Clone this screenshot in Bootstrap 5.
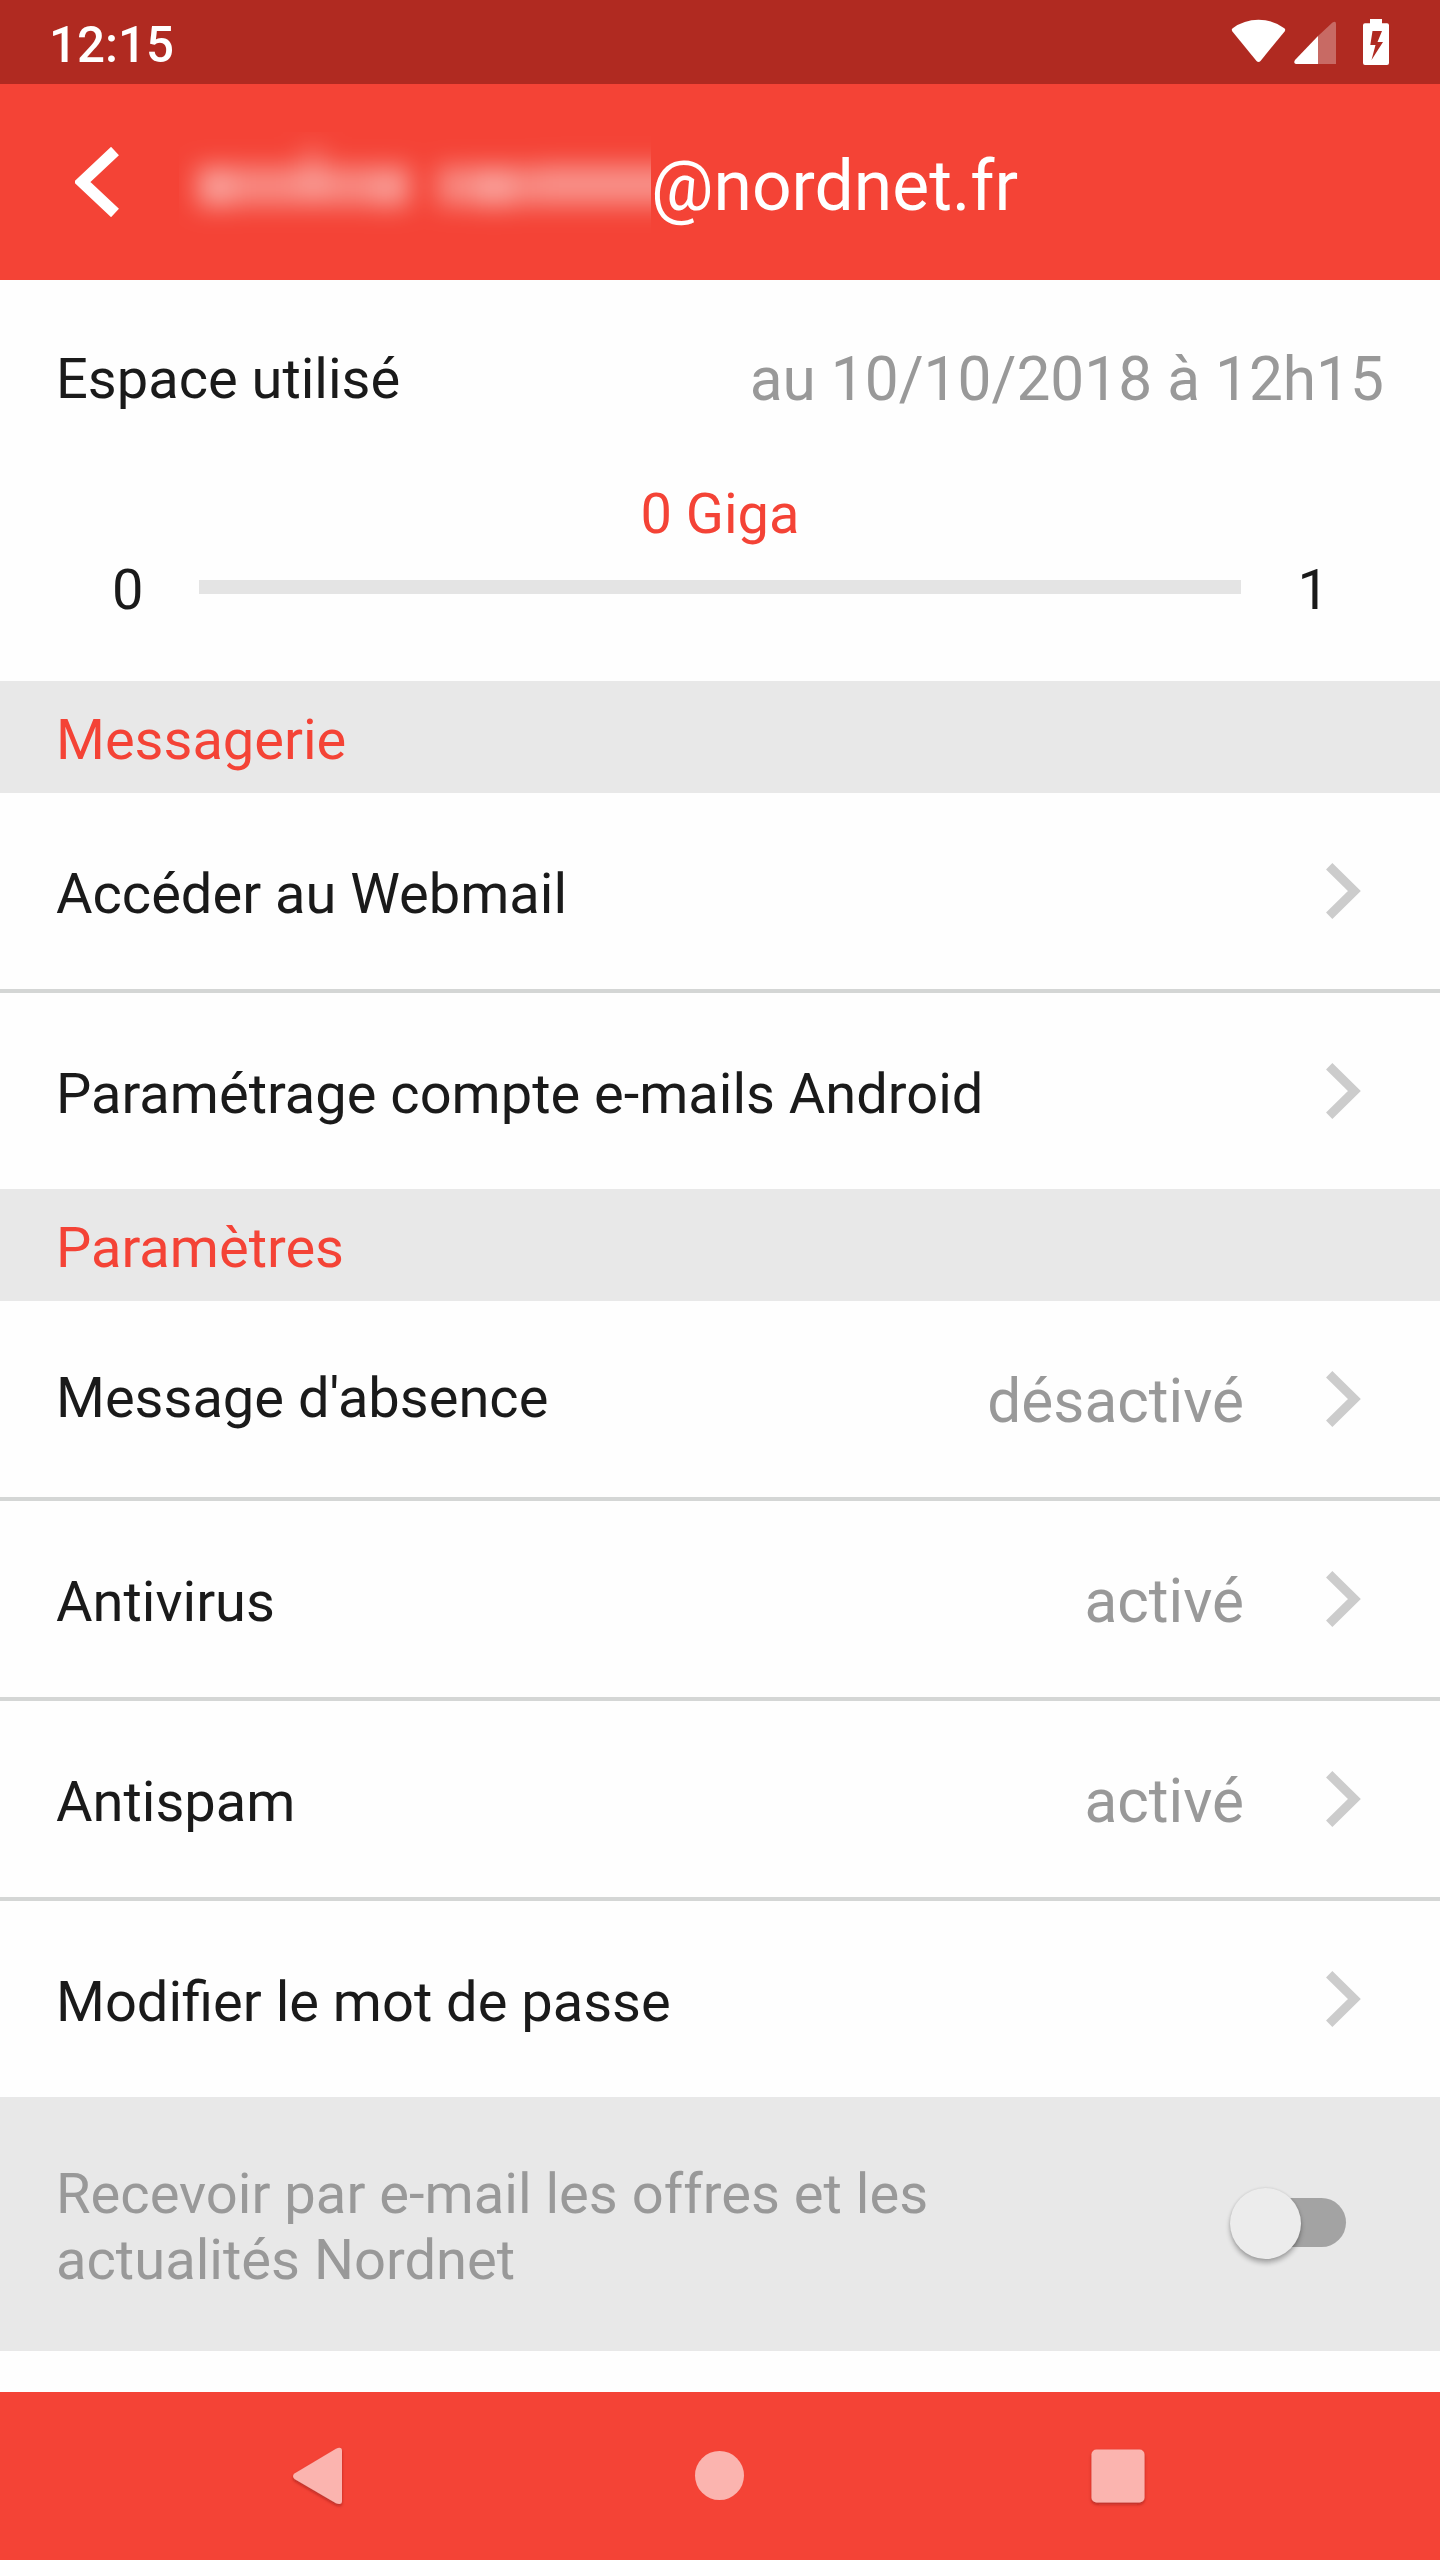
<!DOCTYPE html>
<html lang="fr">
<head>
<meta charset="utf-8">
<meta name="viewport" content="width=device-width, initial-scale=1">
<title>Messagerie Nordnet</title>
<link href="https://cdn.jsdelivr.net/npm/bootstrap@5.3.0/dist/css/bootstrap.min.css" rel="stylesheet">
<style>
  :root { --nn-red: #f44336; --nn-dark: #b02a21; --nn-grey: #e8e8e8; --nn-muted: #999; }
  body { font-family: Roboto, "Noto Sans", sans-serif; font-size: 56px; line-height: 66px; color: #1a1a1a; background: #fefefe; }
  .screen { height: 2560px; overflow: hidden; }
  .status-strip { height: 84px; background: var(--nn-dark); padding: 4px 48px 0 49px; font-size: 49.3px; font-weight: 500; }
  .status-strip span { padding-top: 2px; }
  .status-icons { margin-bottom: 6px; }
  .app-head { height: 196px; background: var(--nn-red); padding-left: 75px; font-size: 69.6px; line-height: 82px; }
  .mail-mask { margin-left: 60px; margin-top: 12px; }
  .mail-host { padding-top: 7px; }
  .usage { height: 401px; padding-top: 66px; }
  .usage-line { padding: 0 56px; height: 68px; }
  .big-note { font-size: 60.3px; line-height: 70px; color: var(--nn-muted); }
  .usage-line .big-note { margin-top: -1px; font-size: 60.4px; }
  .accent { color: var(--nn-red); }
  .usage-value { margin-top: 67px; }
  .gauge { margin-top: 10px; padding: 0 111px 0 112px; }
  .gauge .progress { height: 14px; width: 1042px; margin: 0 2px 6px 0; background: #e4e4e4; }
  .section-title { height: 112px; padding: 6px 56px 0; background: var(--nn-grey); color: var(--nn-red); }
  .list-group-item.entry { height: 200px; padding: 0 79px 0 56px; border: 0; border-bottom: 4px solid #d4d6d5; background: transparent; color: inherit; }
  .list-group-item.entry:last-child { height: 196px; border-bottom: 0; }
  .entry-label { padding-top: 6px; }
  .entry-label.raised { padding-top: 0; margin-top: -2px; }
  .entry-state { padding-top: 6px; margin-right: 82px; }
  .offers { height: 254px; padding: 0 94px 0 56px; background: var(--nn-grey); color: var(--nn-muted); }
  .offers p { width: 960px; padding-top: 6px; font-size: 56.1px; }
  .toggle { width: 116px; height: 71px; margin-bottom: 2px; position: relative; }
  .toggle-track { width: 90px; height: 49px; border-radius: 25px; background: #a3a3a3; margin-left: 26px; margin-bottom: 2px; }
  .toggle-knob { position: absolute; left: 0; top: 0; width: 71px; height: 71px; border-radius: 50%; background: #ececec; box-shadow: 0 4px 5px rgba(0,0,0,.28), 0 0 3px rgba(0,0,0,.12); }
  .system-nav { height: 168px; background: var(--nn-red); }
</style>
</head>
<body>
<div class="screen d-flex flex-column">
  <div class="status-strip d-flex align-items-center justify-content-between text-white">
    <span>12:15</span>
    <svg class="status-icons" width="168" height="50" viewBox="1224 16 168 50" fill="#fff" aria-hidden="true">
      <path d="M1232.7 28.2Q1244 19.7 1258.5 19.7T1284.3 28.2Q1286 29.6 1284.6 31.4L1260.5 60.9Q1258.5 63.1 1256.5 60.9L1232.4 31.4Q1231 29.6 1232.7 28.2Z"/>
      <path opacity=".3" d="M1318 36 1332.5 22.5Q1336 20.5 1336 24V64H1318Z"/>
      <path d="M1318 36V64H1296Q1293 63 1295 60Z"/>
      <path fill-rule="evenodd" d="M1370 19H1382V23.3H1387Q1389 23.3 1389 25.3V63Q1389 65 1387 65H1365Q1363 65 1363 63V25.3Q1363 23.3 1365 23.3H1370ZM1372.5 31 1370.3 45H1375.5L1371.5 60 1383 42H1377.5L1382 31Z"/>
    </svg>
  </div>
  <header class="app-head d-flex align-items-center text-white">
    <svg width="44" height="70" viewBox="0 0 44 70" aria-hidden="true"><path d="M40 4 7 35 40 66" fill="none" stroke="#fff" stroke-width="11.5"/></svg>
    <!-- Masked local part of the address -->
    <svg class="mail-mask" width="472" height="112" viewBox="180 132 472 112" aria-hidden="true">
      <defs><filter id="mask-blur" filterUnits="userSpaceOnUse" x="120" y="90" width="640" height="200"><feGaussianBlur stdDeviation="12"/></filter></defs>
      <g fill="#fff" filter="url(#mask-blur)">
        <rect x="197" y="166" width="215" height="40" opacity=".37"/>
        <rect x="438" y="166" width="280" height="40" opacity=".37"/>
        <rect x="205" y="170" width="28" height="38" opacity=".2"/>
        <rect x="300" y="146" width="28" height="50" opacity=".16"/>
        <rect x="375" y="172" width="28" height="36" opacity=".16"/>
        <rect x="478" y="170" width="34" height="38" opacity=".2"/>
        <rect x="540" y="160" width="170" height="36" opacity=".08"/>
      </g>
    </svg>
    <div class="mail-host">@nordnet.fr</div>
  </header>

  <section class="usage">
    <div class="usage-line d-flex justify-content-between">
      <span>Espace utilisé</span><span class="big-note">au 10/10/2018 à 12h15</span>
    </div>
    <div class="usage-value text-center accent">0 Giga</div>
    <div class="gauge d-flex align-items-center justify-content-between">
      <span>0</span>
      <div class="progress rounded-0" role="progressbar" aria-valuenow="0" aria-valuemin="0" aria-valuemax="1"><div class="progress-bar" style="width:0%"></div></div>
      <span>1</span>
    </div>
  </section>

  <div class="section-title d-flex align-items-center">Messagerie</div>
  <div class="list-group list-group-flush">
    <a href="#" class="list-group-item entry d-flex align-items-center"><span class="entry-label me-auto">Accéder au Webmail</span><svg width="35" height="56" viewBox="0 0 35 56" aria-hidden="true"><path d="M3.2 3.2 28.4 28 3.2 52.8" fill="none" stroke="#ccc" stroke-width="9"/></svg></a>
    <a href="#" class="list-group-item entry d-flex align-items-center"><span class="entry-label me-auto">Paramétrage compte e-mails Android</span><svg width="35" height="56" viewBox="0 0 35 56" aria-hidden="true"><path d="M3.2 3.2 28.4 28 3.2 52.8" fill="none" stroke="#ccc" stroke-width="9"/></svg></a>
  </div>

  <div class="section-title d-flex align-items-center">Paramètres</div>
  <div class="list-group list-group-flush">
    <a href="#" class="list-group-item entry d-flex align-items-center"><span class="entry-label raised me-auto">Message d'absence</span><span class="entry-state big-note">désactivé</span><svg width="35" height="56" viewBox="0 0 35 56" aria-hidden="true"><path d="M3.2 3.2 28.4 28 3.2 52.8" fill="none" stroke="#ccc" stroke-width="9"/></svg></a>
    <a href="#" class="list-group-item entry d-flex align-items-center"><span class="entry-label me-auto">Antivirus</span><span class="entry-state big-note">activé</span><svg width="35" height="56" viewBox="0 0 35 56" aria-hidden="true"><path d="M3.2 3.2 28.4 28 3.2 52.8" fill="none" stroke="#ccc" stroke-width="9"/></svg></a>
    <a href="#" class="list-group-item entry d-flex align-items-center"><span class="entry-label me-auto">Antispam</span><span class="entry-state big-note">activé</span><svg width="35" height="56" viewBox="0 0 35 56" aria-hidden="true"><path d="M3.2 3.2 28.4 28 3.2 52.8" fill="none" stroke="#ccc" stroke-width="9"/></svg></a>
    <a href="#" class="list-group-item entry d-flex align-items-center"><span class="entry-label me-auto">Modifier le mot de passe</span><svg width="35" height="56" viewBox="0 0 35 56" aria-hidden="true"><path d="M3.2 3.2 28.4 28 3.2 52.8" fill="none" stroke="#ccc" stroke-width="9"/></svg></a>
  </div>

  <div class="offers d-flex align-items-center justify-content-between">
    <p class="mb-0">Recevoir par e-mail les offres et les actualités Nordnet</p>
    <div class="toggle d-flex align-items-center" role="switch" aria-checked="false"><div class="toggle-track"></div><div class="toggle-knob"></div></div>
  </div>

  <nav class="system-nav mt-auto">
    <svg class="d-block" width="1440" height="168" viewBox="0 2392 1440 168" aria-hidden="true">
      <defs><filter id="drop" x="-20%" y="-20%" width="140%" height="150%"><feDropShadow dx="0" dy="2" stdDeviation="1.5" flood-color="#7a1008" flood-opacity=".5"/></filter></defs>
      <g fill="#fbb4af" filter="url(#drop)">
        <path d="M294.5 2473.5 336 2448.7Q342 2446.2 342 2451V2501Q342 2505.5 336 2503.3L294.5 2479Q291.5 2476 294.5 2473.5Z"/>
        <rect x="1091.5" y="2449.5" width="53" height="53" rx="5"/>
      </g>
      <circle cx="719.5" cy="2475.5" r="24.5" fill="#fbb4af"/>
    </svg>
  </nav>
</div>
<script src="https://cdn.jsdelivr.net/npm/bootstrap@5.3.0/dist/js/bootstrap.bundle.min.js"></script>
</body>
</html>
